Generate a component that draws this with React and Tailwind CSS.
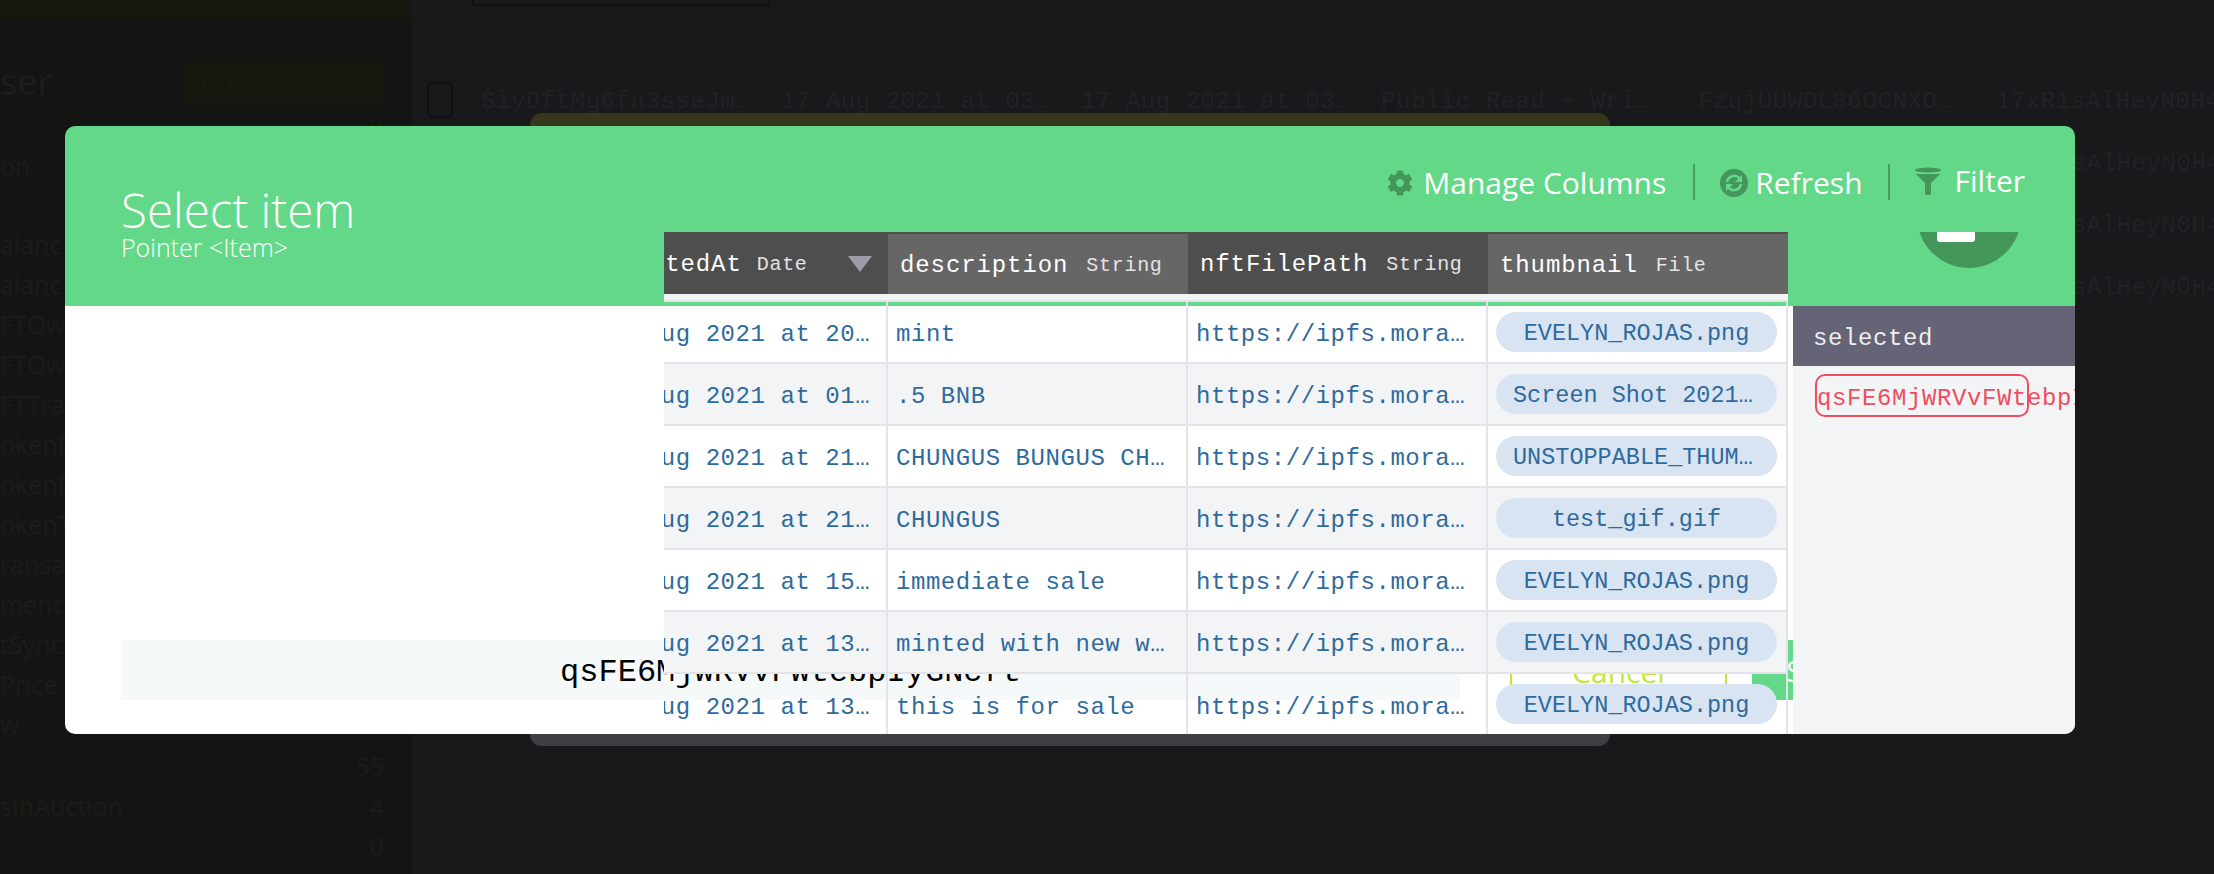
import React from 'react';
import { FaCog } from 'react-icons/fa';

const rows = [
  ['17 Aug 2021 at 20:29:36 UTC', 'mint', 'EVELYN_ROJAS.png'],
  ['17 Aug 2021 at 01:12:44 UTC', '.5 BNB', 'Screen Shot 2021-08-16 at 2.png'],
  ['16 Aug 2021 at 21:40:19 UTC', 'CHUNGUS BUNGUS CHUNGUS BUNGUS', 'UNSTOPPABLE_THUMBNAIL.png'],
  ['16 Aug 2021 at 21:18:02 UTC', 'CHUNGUS', 'test_gif.gif'],
  ['16 Aug 2021 at 15:03:51 UTC', 'immediate sale', 'EVELYN_ROJAS.png'],
  ['16 Aug 2021 at 13:47:26 UTC', 'minted with new wallet address', 'EVELYN_ROJAS.png'],
  ['16 Aug 2021 at 13:22:10 UTC', 'this is for sale', 'EVELYN_ROJAS.png'],
];
const url = 'https://ipfs.moralis.io:2053/ipfs/QmZ';
const side = ['alanc', 'alanc', 'FTOw', 'FTOw', 'FTTra', 'okenB', 'okenB', 'okenT', 'ransa', 'ment', 'tSync', 'Price', 'w'];
const ghost = ['SiyDftMg6fn3sseJm…', '17 Aug 2021 at 03…', '17 Aug 2021 at 03…', 'Public Read + Wri…'];
const mono = "font-['Liberation_Mono',monospace]";
const sans = "font-['Open_Sans',sans-serif]";

function Head({ name, type, active, first }) {
  return (
    <div className={`h-full flex items-center shrink-0 ${first ? 'w-[224px] overflow-hidden' : 'w-[300px]'} ${active ? 'pt-[2px]' : ''}`}>
      <div className={`h-full w-[300px] shrink-0 flex items-center pl-[12px] pt-[4px] ${first ? 'ml-[-72px]' : ''} ${active ? 'bg-[#666666]' : ''}`}>
        <span className="text-[24px] tracking-[0.9px] text-white">{name}</span>
        <span className={`${first ? 'ml-[15px]' : 'ml-[18px]'} text-[20px] tracking-[0.7px] text-[#e4e4e4]`}>{type}</span>
      </div>
    </div>
  );
}

function Row({ r, i }) {
  const last = i === rows.length - 1;
  const first = i === 0;
  const bg = first
    ? 'bg-[linear-gradient(#63d888_4px,#ffffff_4px)]'
    : last ? 'bg-transparent' : i % 2 ? 'bg-[#f3f4f6]' : 'bg-white';
  const cell = 'shrink-0 h-full border-r-2 border-[#e3e3ea]';
  const text = 'block truncate text-[24px] tracking-[0.55px] text-[#2f6a9d] pt-[5px]';
  return (
    <div className={`flex h-[62px] shrink-0 ${last ? '' : 'border-b-2 border-[#e3e3ea]'} ${bg}`}>
      <div className={`${cell} w-[224px] overflow-hidden flex items-center`}>
        <div className="w-[296px] shrink-0 ml-[-75px] pl-[12px] pr-[8px]"><span className={text}>{r[0]}</span></div>
      </div>
      <div className={`${cell} w-[300px] flex items-center pl-[8px] pr-[12px]`}><span className={text}>{r[1]}</span></div>
      <div className={`${cell} w-[300px] flex items-center pl-[8px] pr-[12px]`}><span className={text}>{url}</span></div>
      <div className={`${cell} w-[300px] pt-[10px] pl-[8px] pr-[9px]`}>
        <div className="h-[40px] rounded-[20px] bg-[#d8e4f2] px-[17px] pt-[3px] flex items-center justify-center">
          <span className="truncate text-[23.5px] text-[#2f6a9d]">{r[2]}</span>
        </div>
      </div>
    </div>
  );
}

function Refresh() {
  return (
    <svg width="28" height="28" viewBox="0 0 28 28" className="shrink-0">
      <circle cx="14" cy="14" r="14" fill="#45965a" />
      <path d="M7 13a7.2 7.2 0 0 1 12.6-3.6" fill="none" stroke="#63d888" strokeWidth="2.6" />
      <path d="M21 15a7.2 7.2 0 0 1-12.6 3.6" fill="none" stroke="#63d888" strokeWidth="2.6" />
      <path d="M22 6v7h-7z" fill="#63d888" />
      <path d="M6 22v-7h7z" fill="#63d888" />
    </svg>
  );
}

function Funnel() {
  return (
    <svg width="26" height="28" viewBox="0 0 26 28" className="shrink-0">
      <ellipse cx="13" cy="3" rx="13" ry="2.6" fill="#45965a" />
      <path d="M1 7h24L16 16v11a1.5 1.5 0 0 1-1.5 1h-3A1.5 1.5 0 0 1 10 27V16z" fill="#45965a" />
    </svg>
  );
}

export default function App() {
  return (
    <div className={`relative w-[2214px] h-[874px] overflow-hidden bg-[#19181b] ${sans}`}>
      {/* dimmed page behind the modal */}
      <div className="flex h-full">
        <aside className="w-[412px] shrink-0 bg-[#141412] flex flex-col">
          <div className="h-[20px] bg-[#17170f] shrink-0" />
          <div className="flex items-center justify-between pt-[40px] pr-[28px]">
            <span className="text-[36px] leading-[44px] text-[#1e1d1a]">ser</span>
            <div className="w-[200px] h-[40px] rounded-[4px] bg-[#17170f] flex items-center justify-center text-[26px] text-[#1a1a12]">Create a class</div>
          </div>
          <div className="flex justify-end pr-[30px] mt-[8px] h-[20px] text-[22px] leading-[24px] text-[#1b1b18]">0</div>
          <div className="mt-[14px] h-[40px] text-[25px] leading-[40px] text-[#1c1c19]">on</div>
          <div className="mt-[38px] flex flex-col">
            {side.map((s, i) => (
              <div key={i} className="h-[40px] text-[25px] leading-[40px] text-[#1c1c19]">{s}</div>
            ))}
          </div>
          <div className="flex justify-end pr-[28px] h-[40px] text-[25px] leading-[40px] text-[#1b1b18] mt-[2px]">55</div>
          <div className="flex justify-between pr-[28px] h-[40px] text-[25px] leading-[40px] text-[#1c1c19]"><span>sInAuction</span><span>4</span></div>
          <div className="flex justify-end pr-[28px] h-[40px] text-[25px] leading-[40px] text-[#1b1b18]">0</div>
        </aside>
        <main className="flex-1 min-w-0 overflow-hidden">
          <div className="h-[10px] border-b border-[#1a1c25] pl-[60px]">
            <div className="w-[298px] h-[6px] border-2 border-t-0 border-[#101013]" />
          </div>
          <div className={`flex items-center h-[40px] mt-[70px] pl-[15px] whitespace-nowrap text-[24px] tracking-[0.55px] text-[#222125] ${mono}`}>
            <div className="w-[26px] h-[36px] rounded-[6px] border-2 border-[#111114] shrink-0 mr-[28px]" />
            {ghost.map((g, i) => <span key={i} className="w-[300px] shrink-0 pt-[3px]">{g}</span>)}
            <span className="w-[300px] shrink-0 pt-[3px] ml-[17px]">FzqjUUWDL86OCNXO…</span>
            <span className="shrink-0 pt-[3px] ml-[-2px]">17xR1sAlHeyN0H4J</span>
          </div>
          <div className={`flex flex-col mt-[13px] pl-[1585px] whitespace-nowrap text-[24px] leading-[62px] tracking-[0.55px] text-[#222125] ${mono}`}>
            <span>17xR1sAlHeyN0H4J</span>
            <span>17xR1sAlHeyN0H4J</span>
            <span>17xR1sAlHeyN0H4J</span>
          </div>
        </main>
      </div>

      {/* panel peeking out behind the modal */}
      <div className="absolute left-[530px] top-[113px] w-[1080px] h-[633px] rounded-[12px] overflow-hidden flex flex-col justify-between">
        <div className="h-[20px] bg-[#35361c]" />
        <div className="h-[20px] bg-[#403e42]" />
      </div>

      {/* modal */}
      <div className="absolute left-[65px] top-[126px] w-[2010px] h-[608px] rounded-[10px] overflow-hidden flex flex-col">
        <header className="relative h-[180px] shrink-0 bg-[#63d888] text-white">
          <div className="absolute left-[56px] top-[60px] font-light">
            <div className="text-[47.5px] leading-[48px]">Select item</div>
            <div className="text-[25px] leading-[26px]">Pointer &lt;Item&gt;</div>
          </div>
          <div className="absolute right-[50px] top-[38px] flex items-start h-[38px] text-[30px] leading-[38px]">
            <div className="flex items-center gap-[10px] h-[38px]">
              <FaCog className="text-[#45965a] w-[26px] h-[28px]" />
              <span>Manage Columns</span>
            </div>
            <div className="w-[2px] h-[36px] bg-[#4a9e60] ml-[27px] mr-[25px]" />
            <div className="flex items-center gap-[7px] h-[38px]">
              <Refresh />
              <span>Refresh</span>
            </div>
            <div className="w-[2px] h-[36px] bg-[#4a9e60] ml-[25px] mr-[25px]" />
            <div className="flex items-center gap-[14px] h-[34px]">
              <Funnel />
              <span>Filter</span>
            </div>
          </div>
          <div className="absolute left-[1854px] top-[106px] w-[100px] h-[40px] overflow-hidden">
            <svg width="100" height="40" viewBox="0 0 100 40">
              <circle cx="50" cy="-16" r="52" fill="#45965a" />
              <rect x="18" y="-6" width="38" height="16" rx="3" fill="#ffffff" />
            </svg>
          </div>
        </header>

        <div className="relative flex-1 bg-white flex items-end gap-[50px] pl-[56px] pb-[34px]">
          <div className={`w-[1339px] h-[60px] shrink-0 bg-[#f6f9fa] flex items-center justify-center pt-[5px] text-[32px] text-black ${mono}`}>qsFE6MjWRVvFWtebpIyGNcft</div>
          <div className="w-[217px] h-[60px] shrink-0 border-2 border-[#c1e73a] flex items-center justify-center pt-[3px] text-[30px] text-[#c1e73a]">Cancel</div>
          <div className="w-[160px] h-[60px] shrink-0 -ml-[25px] bg-[#63d888] flex items-center pl-[34px] text-[30px] text-white">Save</div>

          {/* selected panel */}
          <div className="absolute left-[1728px] right-0 top-0 bottom-0 bg-[#f3f4f6] overflow-hidden">
            <div className={`h-[60px] bg-[#656376] flex items-center pl-[20px] pt-[5px] text-[24px] tracking-[0.6px] text-[#eeeeee] ${mono}`}>selected</div>
            <div className={`w-[214px] h-[43px] mt-[8px] ml-[22px] rounded-[10px] border-2 border-[#ef4c60] flex items-center text-[24px] tracking-[0.6px] text-[#ef4c60] whitespace-nowrap ${mono}`}>
              <span className="mt-[7px]">qsFE6MjWRVvFWtebpIyGNcft</span>
            </div>
          </div>
        </div>

        {/* data table sits over header and body */}
        <div className={`absolute left-[599px] top-[106px] w-[1124px] h-[502px] overflow-hidden flex flex-col ${mono}`}>
          <div className="relative h-[62px] shrink-0 flex bg-[#4e4e4e]">
            <Head first name="createdAt" type="Date" />
            <Head active name="description" type="String" />
            <Head name="nftFilePath" type="String" />
            <Head active name="thumbnail" type="File" />
            <svg width="24" height="16" viewBox="0 0 24 16" className="absolute left-[184px] top-[24px]">
              <path d="M0 0h24L12 16z" fill="#9b9ba9" />
            </svg>
          </div>
          <div className="h-[8px] shrink-0 bg-[#f3f4f6] border-b-2 border-[#e3e3ea]" />
          {rows.map((r, i) => <Row key={i} r={r} i={i} />)}
        </div>
      </div>
    </div>
  );
}
